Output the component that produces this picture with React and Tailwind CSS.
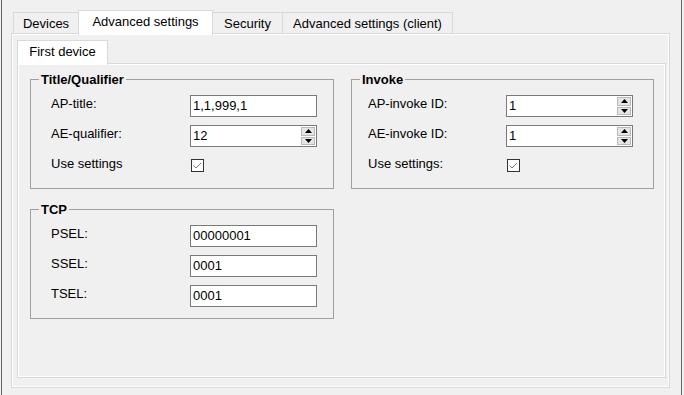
import React from 'react';

const Arrow = ({ down }) => (
  <svg width="7" height="4" viewBox="0 0 7 4" className="block">
    <polygon points={down ? '0,0 7,0 3.5,4' : '0,4 7,4 3.5,0'} fill="#000" />
  </svg>
);

const Field = ({ value, spin }) => (
  <div className="flex h-[22px] w-[127px] items-stretch border border-[#7a7a7a] bg-white">
    <span className="flex-1 pl-[2px] pt-[2px] leading-[16px]">{value}</span>
    {spin && (
      <div className="mr-[1px] flex w-[14px] flex-col gap-[1px] py-[1px]">
        <div className="flex flex-1 items-center justify-center border border-[#b9b9b9] bg-[#e5e5e5]">
          <Arrow />
        </div>
        <div className="flex flex-1 items-center justify-center border border-[#b9b9b9] bg-[#e5e5e5]">
          <Arrow down />
        </div>
      </div>
    )}
  </div>
);

const Check = () => (
  <div className="ml-[1px] mt-[4px] h-[13px] w-[13px] border border-[#333333] bg-white">
    <svg width="11" height="11" viewBox="0 0 11 11" className="block">
      <polyline points="1.5,5.5 4,8 9,3" fill="none" stroke="#7a7a7a" strokeWidth="1" />
    </svg>
  </div>
);

const Group = ({ title, className, labelPad, labelWidth, rows }) => (
  <fieldset className={`border border-[#a0a0a0] ${className}`}>
    <legend className="ml-[8px] px-[2px] text-[13px] font-bold leading-[15px]">{title}</legend>
    <div className={`mt-[8px] flex flex-col gap-[8px] pb-[11px] ${labelPad}`}>
      {rows.map((r) => (
        <div key={r.label} className="flex h-[22px] items-start">
          <span className={`pt-[1px] leading-[15px] ${labelWidth}`}>{r.label}</span>
          {r.check ? <Check /> : <Field value={r.value} spin={r.spin} />}
        </div>
      ))}
    </div>
  </fieldset>
);

const Tab = ({ label, active, width, first }) =>
  active ? (
    <div
      className={`relative z-10 -mb-[2px] flex h-[25px] justify-center border border-b-0 border-[#d9d9d9] bg-white pt-[3px] leading-[15px] ${first ? '' : '-ml-px'} ${width}`}
    >
      {label}
    </div>
  ) : (
    <div
      className={`flex h-[21px] justify-center border border-b-0 border-[#d9d9d9] bg-[#f0f0f0] pt-[3px] leading-[15px] ${first ? '' : '-ml-px'} ${width}`}
    >
      {label}
    </div>
  );

export default function App() {
  return (
    <div className="h-[395px] w-[684px] bg-[#f0f0f0] text-[13px] text-black font-['Liberation_Sans',Arial,sans-serif]">
      <div className="ml-[1px] h-full w-[681px] border-x border-[#646464] pl-[9px]">
        {/* Main tabs */}
        <div className="flex h-[33px] items-end pl-[2px]">
          <Tab label="Devices" width="w-[66px]" first />
          <Tab label="Advanced settings" width="w-[135px]" active />
          <Tab label="Security" width="w-[71px]" />
          <Tab label="Advanced settings (client)" width="w-[171px]" />
        </div>

        {/* Outer tab page */}
        <div className="h-[355px] w-[659px] border border-[#d9d9d9]">
          <div className="h-full border border-white pl-[4px]">
            <div className="flex h-[28px] items-end">
              <Tab label="First device" width="w-[91px]" active first />
            </div>

            {/* Inner tab page */}
            <div className="h-[315px] w-[649px] border border-[#d9d9d9]">
              <div className="flex h-full items-start gap-[17px] border border-white pl-[11px] pt-[7px]">
                <div className="flex flex-col">
                  <Group
                    title="Title/Qualifier"
                    className="w-[304px]"
                    labelPad="pl-[20px]"
                    labelWidth="w-[139px]"
                    rows={[
                      { label: 'AP-title:', value: '1,1,999,1' },
                      { label: 'AE-qualifier:', value: '12', spin: true },
                      { label: 'Use settings', check: true },
                    ]}
                  />
                  <Group
                    title="TCP"
                    className="mt-[13px] w-[304px]"
                    labelPad="pl-[20px]"
                    labelWidth="w-[139px]"
                    rows={[
                      { label: 'PSEL:', value: '00000001' },
                      { label: 'SSEL:', value: '0001' },
                      { label: 'TSEL:', value: '0001' },
                    ]}
                  />
                </div>
                <Group
                  title="Invoke"
                  className="w-[303px]"
                  labelPad="pl-[16px]"
                  labelWidth="w-[138px]"
                  rows={[
                    { label: 'AP-invoke ID:', value: '1', spin: true },
                    { label: 'AE-invoke ID:', value: '1', spin: true },
                    { label: 'Use settings:', check: true },
                  ]}
                />
              </div>
            </div>
          </div>
        </div>
      </div>
    </div>
  );
}
